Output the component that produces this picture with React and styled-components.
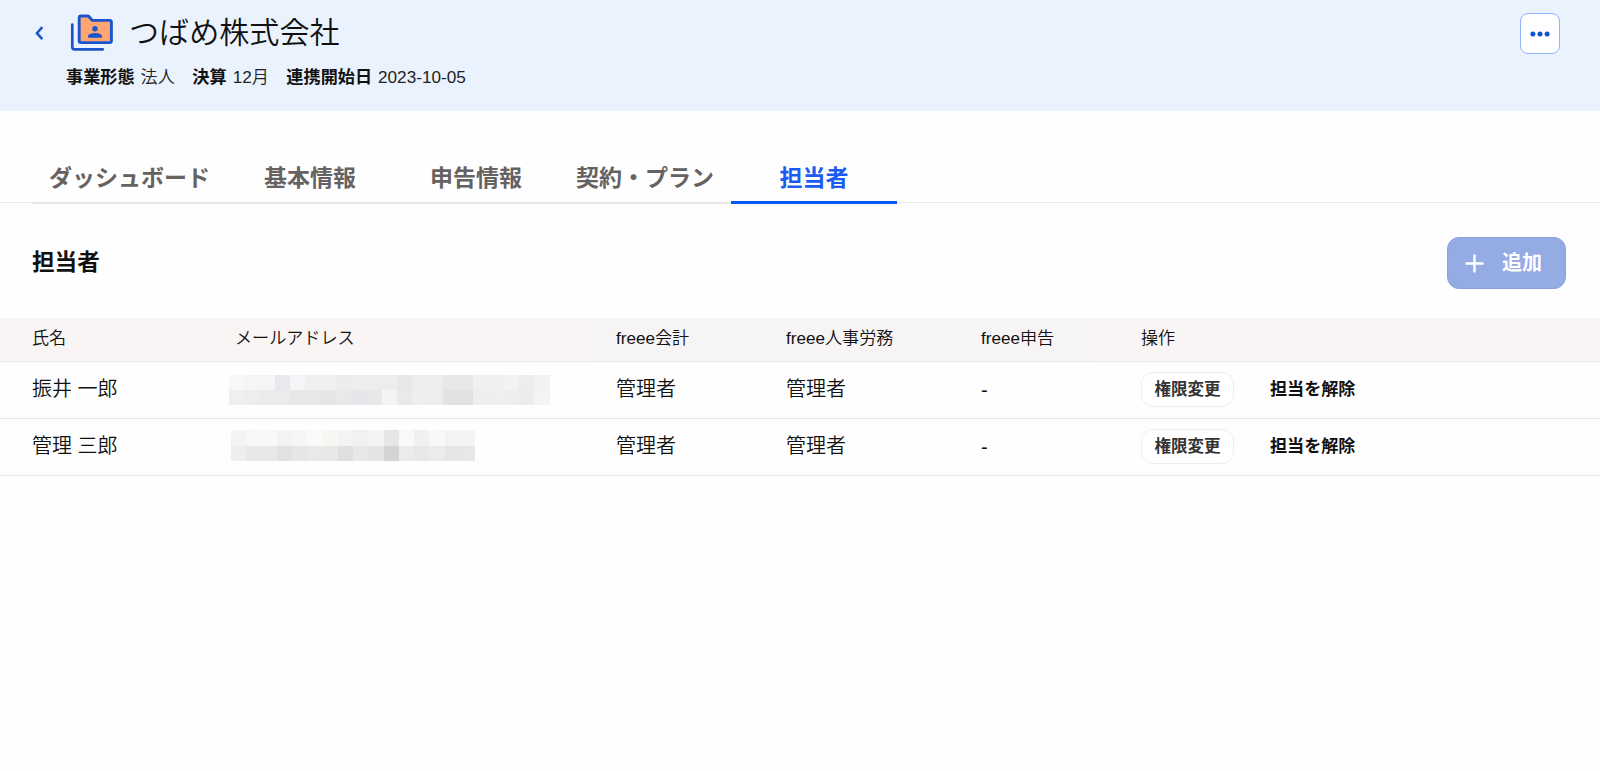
import styled, { createGlobalStyle } from "styled-components";

const GlobalStyle = createGlobalStyle`
  * {
    box-sizing: border-box;
  }
  body {
    margin: 0;
    background: #fefefe;
    color: #111;
    font-family: "Liberation Sans", "Noto Sans CJK JP", sans-serif;
  }
  button {
    font-family: inherit;
    padding: 0;
    cursor: pointer;
  }
`;

const Header = styled.header`
  display: flex;
  justify-content: space-between;
  align-items: flex-start;
  height: 111px;
  padding: 13px 40px 0 32px;
  background: #eaf2fe;
`;

const TitleRow = styled.div`
  display: flex;
  align-items: center;
  height: 39px;
`;

const BackButton = styled.button`
  display: flex;
  width: 38px;
  border: none;
  background: none;
`;

const Title = styled.h1`
  margin: 0 0 0 15px;
  font-size: 30.1px;
  font-weight: 350;
  line-height: 39px;
`;

const MetaList = styled.dl`
  display: flex;
  gap: 17.5px;
  margin: 13px 0 0 34px;
  font-size: 17.15px;
  line-height: 24px;
`;

const MetaItem = styled.div`
  display: flex;
  gap: 6px;

  dt {
    font-weight: 700;
  }
  dd {
    margin: 0;
    color: #222;
    font-weight: 350;
  }
`;

const MenuButton = styled.button`
  display: flex;
  align-items: center;
  justify-content: center;
  width: 40px;
  height: 41px;
  border: 1px solid #8fb4fb;
  border-radius: 8px;
  background: #fff;
`;

const TabBar = styled.nav`
  display: flex;
  height: 93px;
  padding: 0 32px;
  background: linear-gradient(#e9e7e7, #e9e7e7) 0 91px / 100% 1px no-repeat;
`;

const Tab = styled.button`
  min-width: 166px;
  padding: ${({ $active }) => ($active ? "44px" : "42px")} 17px 0;
  border: none;
  border-bottom: ${({ $active }) => ($active ? "3px solid #0a57f5" : "1px solid #e6e5e5")};
  background: none;
  color: ${({ $active }) => ($active ? "#1a5cf3" : "#666261")};
  font-size: 23px;
  font-weight: 700;
  line-height: 44px;
  white-space: nowrap;
`;

const SectionHead = styled.div`
  display: flex;
  align-items: center;
  justify-content: space-between;
  height: 114px;
  padding: 4px 34px 0 32px;
`;

const SectionTitle = styled.h2`
  margin: 0 0 5px;
  font-size: 22.6px;
  font-weight: 700;
`;

const AddButton = styled.button`
  display: flex;
  align-items: center;
  gap: 18px;
  width: 119px;
  height: 52px;
  padding-left: 17px;
  border: 1px solid #88a5e2;
  border-radius: 12px;
  background: #94abe3;
  color: #fff;
  font-size: 20px;
  font-weight: 700;
`;

const AddLabel = styled.span`
  padding-bottom: 3px;
`;

const Row = styled.div`
  display: grid;
  grid-template-columns: 197px 387px 170px 195px 160px 1fr;
  align-items: center;
  height: 57px;
  padding-left: 32px;
  border-bottom: 1px solid #e6e5e5;
  font-size: 20px;
  font-weight: 350;
`;

const HeadRow = styled(Row)`
  height: 44px;
  background: linear-gradient(#f7f4f5, #f7f4f5) 588px 0 / 506px 100% no-repeat #f9f5f4;
  border-bottom-color: #eeebea;
  font-size: 17.1px;
`;

const HeadCell = styled.span`
  padding-bottom: 7px;
  padding-left: ${({ $indent }) => ($indent ? "6px" : "0")};
`;

const Cell = styled.span`
  padding-bottom: 6px;
`;

const Actions = styled.div`
  display: flex;
  align-items: center;
  gap: 36px;
`;

const OutlineButton = styled.button`
  width: 93px;
  height: 35px;
  margin-bottom: 1px;
  padding-bottom: 3px;
  border: 1px solid #efeeee;
  border-radius: 12px;
  background: #fff;
  color: #333;
  font-size: 16.5px;
  font-weight: 700;
`;

const TextButton = styled.button`
  padding-bottom: 5px;
  border: none;
  background: none;
  color: #111;
  font-size: 17.1px;
  font-weight: 700;
`;

const Mosaic = styled.div`
  display: grid;
  grid-template-columns: repeat(${({ $columns }) => $columns}, 15.28px);
  grid-auto-rows: 15.4px;
  margin: ${({ $margin }) => $margin};
`;

const Pixel = styled.i`
  background: ${({ $color }) => $color};
`;

const tabs = ["ダッシュボード", "基本情報", "申告情報", "契約・プラン", "担当者"];

const meta = [
  { label: "事業形態", value: "法人" },
  { label: "決算", value: "12月" },
  { label: "連携開始日", value: "2023-10-05" },
];

const columns = ["氏名", "メールアドレス", "freee会計", "freee人事労務", "freee申告", "操作"];

const members = [
  {
    name: "振井 一郎",
    margin: "0 0 0 0",
    pixels: [
      "f8f7f5 f5f5f5 f5f5f5 e9e9ed f5f5f7 f0f0ef f0f0ef edebec ededed ededed ededed e7e8e8 ededec ededed e8e8e8 e8e8e8 f0f0f0 f0f0f1 f2f2f3 ededed f2f2f3",
      "efefef ededec eceaeb ebebee e8e8e8 e8e8e8 e5e5e5 ebe9e7 e4e6e9 e8e8e8 f4f4f4 e9e9e7 eeeeec ededed e2e2e2 e2e2e2 eeeef1 efeff0 efedef ececef f4f4f4",
    ],
  },
  {
    name: "管理 三郎",
    margin: "-3px 0 0 2px",
    pixels: [
      "f3f3f4 f7f7f5 f8f8f7 f3f3f4 f6f6f6 fafaf8 f6f6f2 f3f3f4 f1f1f3 f4f4f4 e6e6e6 f9f9f8 f0f0f1 f9f7f8 f3f3f4 f4f4f4",
      "eeeeee e8e8e6 e8e8e7 e1e1e1 e6e6e6 e9e9e9 e8e8e7 dfdfe0 e8e8eb e5e4e2 d3d3d3 ebebea e7e9e8 ebebe9 e4e6e8 e8e7e8",
    ],
  },
];

function FolderIcon() {
  return (
    <svg width="44" height="38" viewBox="70 13.5 44 38" fill="none">
      <path
        d="M79.2 17.3Q79.2 15.5 81 15.5H88.4L92.4 19.9H109.6Q111.4 19.9 111.4 21.7V40.3Q111.4 42.1 109.6 42.1H81Q79.2 42.1 79.2 40.3Z"
        fill="#ffa572"
        stroke="#1a55cc"
        strokeWidth="2.9"
        strokeLinejoin="round"
      />
      <path
        d="M72.3 24.2V46.5Q72.3 48.8 74.6 48.8H102.8"
        stroke="#1a55cc"
        strokeWidth="2.7"
        strokeLinecap="round"
      />
      <circle cx="95" cy="28.2" r="2.7" fill="#1a55cc" />
      <path d="M88 37.2V35.9C88 33.5 92 32.6 95 32.6S102 33.5 102 35.9V37.2Z" fill="#1a55cc" />
    </svg>
  );
}

function Email({ pixels, margin }) {
  const colors = pixels.join(" ").split(" ");
  return (
    <Mosaic $columns={colors.length / 2} $margin={margin}>
      {colors.map((color, index) => (
        <Pixel key={index} $color={`#${color}`} />
      ))}
    </Mosaic>
  );
}

export default function App() {
  return (
    <>
      <GlobalStyle />
      <Header>
        <div>
          <TitleRow>
            <BackButton aria-label="戻る">
              <svg width="14" height="16" viewBox="0 0 14 16" fill="none">
                <path d="M10.3 2.2L4.9 8.2L10.3 14.2" stroke="#1a55cc" strokeWidth="2.5" />
              </svg>
            </BackButton>
            <FolderIcon />
            <Title>つばめ株式会社</Title>
          </TitleRow>
          <MetaList>
            {meta.map((item) => (
              <MetaItem key={item.label}>
                <dt>{item.label}</dt>
                <dd>{item.value}</dd>
              </MetaItem>
            ))}
          </MetaList>
        </div>
        <MenuButton aria-label="メニュー">
          <svg width="20" height="6" viewBox="0 0 20 6" fill="#0f52d0">
            <circle cx="2.9" cy="3" r="2.5" />
            <circle cx="10" cy="3" r="2.5" />
            <circle cx="17.1" cy="3" r="2.5" />
          </svg>
        </MenuButton>
      </Header>

      <TabBar>
        {tabs.map((tab) => (
          <Tab key={tab} $active={tab === "担当者"}>
            {tab}
          </Tab>
        ))}
      </TabBar>

      <SectionHead>
        <SectionTitle>担当者</SectionTitle>
        <AddButton>
          <svg width="19" height="19" viewBox="0 0 19 19" stroke="#fff" strokeWidth="2.4">
            <path d="M9.5 0.5V18.5M0.5 9.5H18.5" />
          </svg>
          <AddLabel>追加</AddLabel>
        </AddButton>
      </SectionHead>

      <HeadRow>
        {columns.map((column) => (
          <HeadCell key={column} $indent={column === "メールアドレス"}>
            {column}
          </HeadCell>
        ))}
      </HeadRow>
      {members.map((member) => (
        <Row key={member.name}>
          <Cell>{member.name}</Cell>
          <Email pixels={member.pixels} margin={member.margin} />
          <Cell>管理者</Cell>
          <Cell>管理者</Cell>
          <span>-</span>
          <Actions>
            <OutlineButton>権限変更</OutlineButton>
            <TextButton>担当を解除</TextButton>
          </Actions>
        </Row>
      ))}
    </>
  );
}
